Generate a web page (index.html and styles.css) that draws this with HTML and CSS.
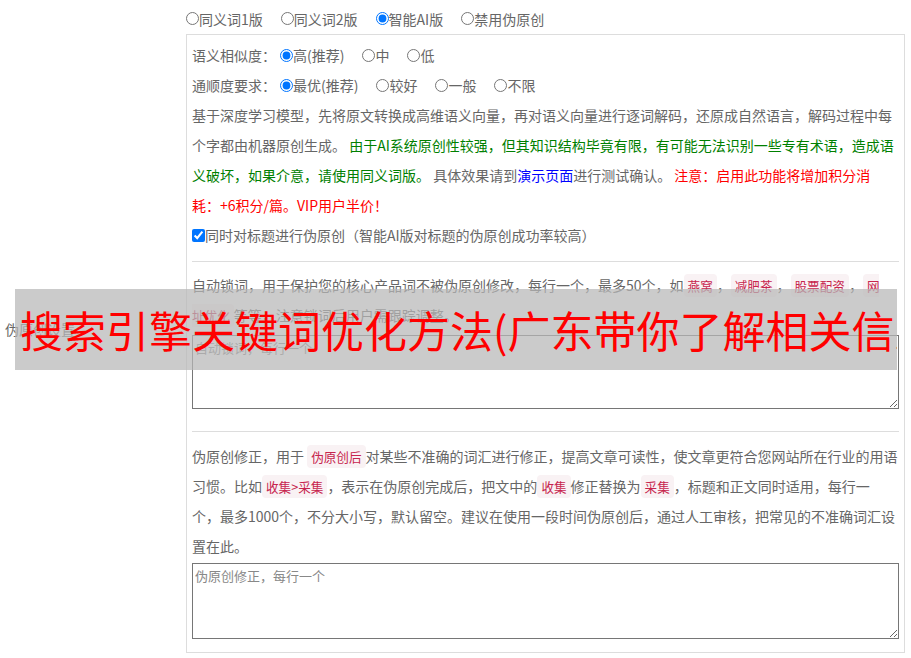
FILE: index.html
```html
<!DOCTYPE html>
<html lang="zh-CN">
<head>
<meta charset="utf-8">
<title>伪原创设置</title>
<link rel="stylesheet" href="styles.css">
</head>
<body>
<div class="page">
  <div class="label-col">伪原创设置</div>
  <div class="main-col">
    <div class="opt-row top-row">
      <label class="opt"><input type="radio" name="mode">同义词1版</label>
      <label class="opt"><input type="radio" name="mode">同义词2版</label>
      <label class="opt"><input type="radio" name="mode" checked>智能AI版</label>
      <label class="opt"><input type="radio" name="mode">禁用伪原创</label>
    </div>
    <div class="panel">
      <div class="opt-row">
        <span class="field">语义相似度：</span>
        <label class="opt"><input type="radio" name="sim" checked>高(推荐)</label>
        <label class="opt"><input type="radio" name="sim">中</label>
        <label class="opt"><input type="radio" name="sim">低</label>
      </div>
      <div class="opt-row">
        <span class="field">通顺度要求：</span>
        <label class="opt"><input type="radio" name="flu" checked>最优(推荐)</label>
        <label class="opt"><input type="radio" name="flu">较好</label>
        <label class="opt"><input type="radio" name="flu">一般</label>
        <label class="opt"><input type="radio" name="flu">不限</label>
      </div>
      <p class="desc">基于深度学习模型，先将原文转换成高维语义向量，再对语义向量进行逐词解码，还原成自然语言，解码过程中每<br>个字都由机器原创生成。 <span class="green">由于AI系统原创性较强，但其知识结构毕竟有限，有可能无法识别一些专有术语，造成语<br>义破坏，如果介意，请使用同义词版。</span> 具体效果请到<a class="demo" href="#">演示页面</a>进行测试确认。 <span class="red">注意：启用此功能将增加积分消<br>耗：+6积分/篇。VIP用户半价！</span></p>
      <label class="check"><input type="checkbox" checked>同时对标题进行伪原创（智能AI版对标题的伪原创成功率较高）</label>
      <hr class="sep first">
      <p class="desc">自动锁词，用于保护您的核心产品词不被伪原创修改，每行一个，最多50个，如<code class="kw">燕窝</code>，<code class="kw">减肥茶</code>，<code class="kw">股票配资</code>，<code class="kw">网<br>址优化</code>等等，注意锁词后用户需跟踪调整。</p>
      <textarea class="words lock" placeholder="自动锁词，每行一个"></textarea>
      <hr class="sep second">
      <p class="desc">伪原创修正，用于 <code class="kw">伪原创后</code>对某些不准确的词汇进行修正，提高文章可读性，使文章更符合您网站所在行业的用语<br>习惯。比如<code class="kw">收集&gt;采集</code>，表示在伪原创完成后，把文中的<code class="kw">收集</code>修正替换为<code class="kw">采集</code>，标题和正文同时适用，每行一<br>个，最多1000个，不分大小写，默认留空。建议在使用一段时间伪原创后，通过人工审核，把常见的不准确词汇设<br>置在此。</p>
      <textarea class="words fix" placeholder="伪原创修正，每行一个"></textarea>
    </div>
  </div>
</div>
<div class="banner">搜索引擎关键词优化方法(广东带你了解相关信息)</div>
</body>
</html>
```

FILE: styles.css
```css
html, body {
  margin: 0;
  padding: 0;
  background: #fff;
}

body {
  font-family: "Noto Sans CJK SC", "Noto Sans", sans-serif;
  font-size: 14px;
  color: #666;
  position: relative;
}

.page {
  display: grid;
  grid-template-columns: 181px 1fr;
  width: 911px;
}

.label-col {
  align-self: center;
  padding-left: 5px;
  white-space: nowrap;
}

.main-col {
  padding: 3px 6px 5px 5px;
}

.opt-row {
  display: flex;
  align-items: center;
  height: 30px;
  white-space: nowrap;
}

.top-row {
  height: 31px;
}

.opt {
  display: inline-flex;
  align-items: center;
  margin-right: 18px;
}

.opt input {
  width: 13px;
  height: 13px;
  margin: 0;
}

.field {
  margin-right: 4px;
}

.panel {
  border: 1px solid #ddd;
  padding: 5px 5px 13px;
}

.desc {
  margin: 0;
  line-height: 30px;
  white-space: nowrap;
}

.green {
  color: #008000;
}

.red {
  color: #ff0000;
}

.demo {
  color: #0000ff;
  text-decoration: none;
}

.check {
  display: flex;
  align-items: center;
  height: 30px;
  white-space: nowrap;
}

.check input {
  width: 13px;
  height: 13px;
  margin: 0;
}

.kw {
  font-family: "Noto Sans CJK SC", sans-serif;
  font-size: 90%;
  line-height: 1;
  color: #c7254e;
  background: #f9f2f4;
  padding: 2px 4px;
  border-radius: 4px;
}

.sep {
  border: 0;
  border-top: 1px solid #ddd;
  height: 0;
}

.sep.first {
  margin: 11px 0 8px;
}

.sep.second {
  margin: 22px 0 9px;
}

.words {
  display: block;
  width: 100%;
  box-sizing: border-box;
  border: 1px solid #767676;
  padding: 2px;
  font-family: "Noto Sans CJK SC", sans-serif;
  font-size: 13px;
  color: #555;
  resize: both;
}

.words::placeholder {
  color: #888;
}

.words.lock {
  margin-top: 5px;
  height: 74px;
}

.words.fix {
  margin-top: 2px;
  height: 76px;
}

.banner {
  position: absolute;
  left: 15px;
  top: 289px;
  width: 877px;
  height: 81px;
  padding-left: 5px;
  overflow: hidden;
  white-space: nowrap;
  background: rgba(183, 183, 183, 0.72);
  color: #ff0000;
  font-size: 43px;
  line-height: 81px;
}
```
